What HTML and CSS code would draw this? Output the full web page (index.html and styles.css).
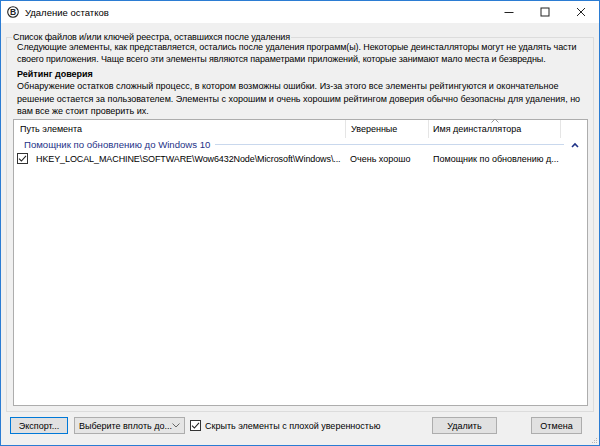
FILE: index.html
```
<html>
<head>
<title>Удаление остатков</title>
<link rel="stylesheet" href="styles.css">
</head>
<body>
<div class="window">
	<div class="titlebar">
		<svg class="appicon" width="12" height="12" viewBox="0 0 12 12"><circle cx="6" cy="6" r="5.3" fill="none" stroke="#222" stroke-width="1.1"/><text x="6" y="8.9" text-anchor="middle" font-size="8.5" font-weight="bold" font-family="Liberation Sans" fill="#222">B</text></svg>
		<div class="caption">Удаление остатков</div>
		<div class="controls">
			<div class="ctl"><svg width="10" height="10" viewBox="0 0 10 10"><path d="M0.5 5.5h9" stroke="#222" stroke-width="1"/></svg></div>
			<div class="ctl"><svg width="10" height="10" viewBox="0 0 10 10"><rect x="1" y="1" width="8" height="8" fill="none" stroke="#222" stroke-width="1"/></svg></div>
			<div class="ctl"><svg width="10" height="10" viewBox="0 0 10 10"><path d="M1 1L9 9M9 1L1 9" stroke="#222" stroke-width="1"/></svg></div>
		</div>
	</div>

	<fieldset class="group">
		<legend>Список файлов и/или ключей реестра, оставшихся после удаления</legend>
		<div class="explanation intro">
			Следующие элементы, как представляется, остались после удаления программ(ы). Некоторые деинсталляторы могут не удалять части<br/>
			своего приложения. Чаще всего эти элементы являются параметрами приложений, которые занимают мало места и безвредны.
		</div>
		<div class="head">Рейтинг доверия</div>
		<div class="explanation rating">
			Обнаружение остатков сложный процесс, в котором возможны ошибки. Из-за этого все элементы рейтингуются и окончательное<br/>
			решение остается за пользователем. Элементы с хорошим и очень хорошим рейтингом доверия обычно безопасны для удаления, но<br/>
			вам все же стоит проверить их.
		</div>

		<div class="list">
			<div class="list-head">
				<div class="col c1">Путь элемента</div>
				<div class="col c2">Уверенные</div>
				<div class="col c3">Имя деинсталлятора<svg class="sort" width="8" height="5" viewBox="0 0 8 5"><path d="M0.5 4.5L4 1L7.5 4.5" fill="none" stroke="#9a9a9a" stroke-width="1"/></svg></div>
				<div class="col c4"></div>
			</div>
			<div class="list-group">
				<span class="group-name">Помощник по обновлению до Windows 10</span>
				<span class="group-line"></span>
				<svg class="group-toggle" width="8" height="6" viewBox="0 0 8 6"><path d="M1 5L4 2L7 5" fill="none" stroke="#1e3287" stroke-width="1.6"/></svg>
			</div>
			<div class="list-row">
				<div class="col c1"><span class="check"><svg width="9" height="9" viewBox="0 0 9 9"><path d="M1 4.6L3.4 7L8 1.8" fill="none" stroke="#222" stroke-width="1.1"/></svg></span><span class="path">HKEY_LOCAL_MACHINE\SOFTWARE\Wow6432Node\Microsoft\Windows\...</span></div>
				<div class="col c2">Очень хорошо</div>
				<div class="col c3">Помощник по обновлению д...</div>
			</div>
		</div>
	</fieldset>

	<div class="actions">
		<button class="btn focused export">Экспорт...</button>
		<div class="combo">Выберите вплоть до...<svg width="8" height="5" viewBox="0 0 8 5"><path d="M0.5 0.5L4 4L7.5 0.5" fill="none" stroke="#666" stroke-width="1"/></svg></div>
		<label class="hide-bad"><span class="check"><svg width="9" height="9" viewBox="0 0 9 9"><path d="M1 4.6L3.4 7L8 1.8" fill="none" stroke="#222" stroke-width="1.1"/></svg></span>Скрыть элементы с плохой уверенностью</label>
		<div class="spacer"></div>
		<button class="btn remove">Удалить</button>
		<button class="btn cancel">Отмена</button>
	</div>
	<svg class="grip" width="7" height="7" viewBox="0 0 7 7"><g fill="#b8b8b8"><rect x="5" y="1" width="1" height="1"/><rect x="3" y="3" width="1" height="1"/><rect x="5" y="3" width="1" height="1"/><rect x="1" y="5" width="1" height="1"/><rect x="3" y="5" width="1" height="1"/><rect x="5" y="5" width="1" height="1"/></g></svg>
</div>
</body>
</html>
```
FILE: styles.css
```
body { margin:0; font-family:"Liberation Sans", sans-serif; font-size:9px; color:#000; }
.window { position:relative; width:600px; height:446px; box-sizing:border-box; border:1px solid #2b7cd3; background:#f0f0f0; }

.titlebar { height:22px; background:#fff; display:flex; align-items:center; padding-left:6px; }
.appicon { margin-right:6px; }
.caption { font-size:9.5px; color:#000; }
.controls { margin-left:auto; display:flex; height:22px; }
.ctl { width:36px; display:flex; align-items:center; justify-content:center; }

.group { margin:8px 5px 0 5px; padding:0 5px 5px 6px; border:1px solid #dcdcdc; }
.group legend { padding:0 1px; margin-left:-1px; line-height:12px; letter-spacing:-0.1px; }
.explanation { padding-left:4px; line-height:12px; white-space:nowrap; }
.intro { margin-top:-2px; letter-spacing:-0.1px; }
.head { padding-left:4px; font-weight:bold; line-height:12px; margin-top:3px; }
.rating { line-height:12.5px; }

.list { margin-top:1px; height:285px; background:#fff; border:1px solid #adadad; }
.list-head { display:flex; height:18px; align-items:center; }
.list-head .col { height:18px; line-height:18px; border-right:1px solid #e5e5e5; box-sizing:border-box; }
.col { white-space:nowrap; overflow:hidden; }
.c1 { width:332px; padding-left:6px; box-sizing:border-box; }
.c2 { width:83px; padding-left:5px; box-sizing:border-box; }
.c3 { width:132px; padding-left:4px; box-sizing:border-box; position:relative; overflow:visible; }
.c4 { width:25px; border-right:none !important; }
.sort { position:absolute; left:62px; top:-2px; }

.list-group { display:flex; align-items:center; height:14px; padding-left:10px; }
.group-name { color:#1e3287; font-size:9.6px; }
.group-line { flex:1; height:1px; background:#c9d8ed; margin-left:5px; }
.group-toggle { margin:0 8px 0 7px; }

.list-row { display:flex; height:14px; align-items:center; }
.list-row .c1 { padding-left:3px; display:flex; align-items:center; }
.list-row .c2 { padding-left:4px; }
.list-row .c3 { padding-left:4px; }
.path { letter-spacing:-0.1px; }
.check { width:11px; height:11px; flex:none; box-sizing:border-box; border:1px solid #333; background:#fff; display:inline-flex; align-items:center; justify-content:center; margin-right:8px; }

.actions { display:flex; align-items:center; margin-top:5px; padding-left:9px; padding-right:17px; height:18px; }
.btn { font-family:"Liberation Sans", sans-serif; font-size:9px; height:17px; background:#e1e1e1; border:1px solid #adadad; padding:0; color:#000; }
.btn.focused { border-color:#0078d7; }
.export { width:58px; }
.combo { margin-left:6px; width:111px; height:17px; box-sizing:border-box; background:#e5e5e5; border:1px solid #adadad; display:flex; align-items:center; justify-content:space-between; padding:0 4px 0 4px; white-space:nowrap; }
.hide-bad { margin-left:5px; display:flex; align-items:center; white-space:nowrap; }
.hide-bad .check { margin-right:4px; }
.spacer { flex:1; }
.remove { width:65px; }
.cancel { width:51px; margin-left:34px; }
.grip { position:absolute; right:1px; bottom:1px; }
```
